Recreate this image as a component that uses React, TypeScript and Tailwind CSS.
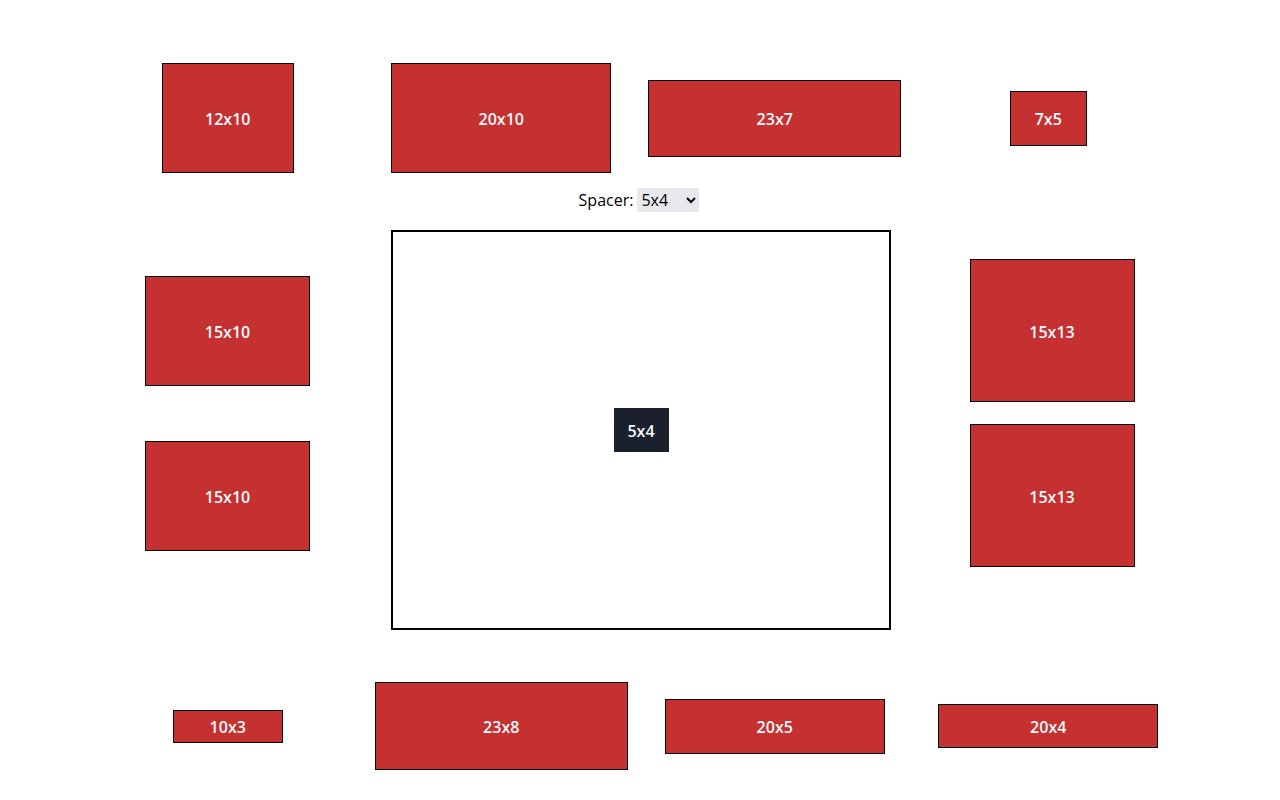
import { useState } from 'react'

const UNIT = 11

type Block = { w: number; h: number }

const topRow: Block[] = [
  { w: 12, h: 10 },
  { w: 20, h: 10 },
  { w: 23, h: 7 },
  { w: 7, h: 5 },
]

const bottomRow: Block[] = [
  { w: 10, h: 3 },
  { w: 23, h: 8 },
  { w: 20, h: 5 },
  { w: 20, h: 4 },
]

function Piece({ w, h }: Block) {
  return (
    <div
      className="flex items-center justify-center border border-black bg-[#c53030] pt-[2px] text-[16px] font-semibold text-[#f7fafc]"
      style={{ width: w * UNIT, height: h * UNIT }}
    >
      {w}x{h}
    </div>
  )
}

export default function App() {
  const [spacer, setSpacer] = useState('5x4')
  const [sw, sh] = spacer.split('x').map(Number)

  return (
    <div className="min-h-[800px] w-full bg-white pl-[91px] pt-[63px] text-black" style={{ fontFamily: '"Open Sans", "Noto Sans", sans-serif' }}>
      {/* top row */}
      <div className="grid h-[110px] w-[1094px] grid-cols-4 items-center justify-items-center">
        {topRow.map((b, i) => (
          <Piece key={i} {...b} />
        ))}
      </div>

      {/* middle */}
      <div className="mt-[15px] flex">
        <div className="flex w-[273px] flex-col items-center gap-[55px] pt-[88px]">
          <Piece w={15} h={10} />
          <Piece w={15} h={10} />
        </div>

        <div className="ml-[27px] flex w-[500px] flex-col items-center">
          <div className="-ml-[4px] flex h-[24px] items-center gap-[4px] text-[16px]">
            <span>Spacer:</span>
            <select
              value={spacer}
              onChange={e => setSpacer(e.target.value)}
              className="h-[24px] w-[62px] bg-[#e9e9ed] text-[16px]"
            >
              <option>5x4</option>
              <option>3x3</option>
              <option>4x2</option>
              <option>6x6</option>
            </select>
          </div>
          <div className="mt-[18px] flex h-[400px] w-[500px] items-center justify-center border-2 border-black">
            <div
              className="flex items-center justify-center bg-[#1a202c] pt-[2px] text-[16px] font-semibold text-[#f7fafc]"
              style={{ width: sw * UNIT, height: sh * UNIT }}
            >
              {spacer}
            </div>
          </div>
        </div>

        <div className="ml-[24px] flex w-[274px] flex-col items-center gap-[22px] pt-[71px]">
          <Piece w={15} h={13} />
          <Piece w={15} h={13} />
        </div>
      </div>

      {/* bottom row */}
      <div className="mt-[52px] grid h-[88px] w-[1094px] grid-cols-4 items-center justify-items-center">
        {bottomRow.map((b, i) => (
          <Piece key={i} {...b} />
        ))}
      </div>
    </div>
  )
}
